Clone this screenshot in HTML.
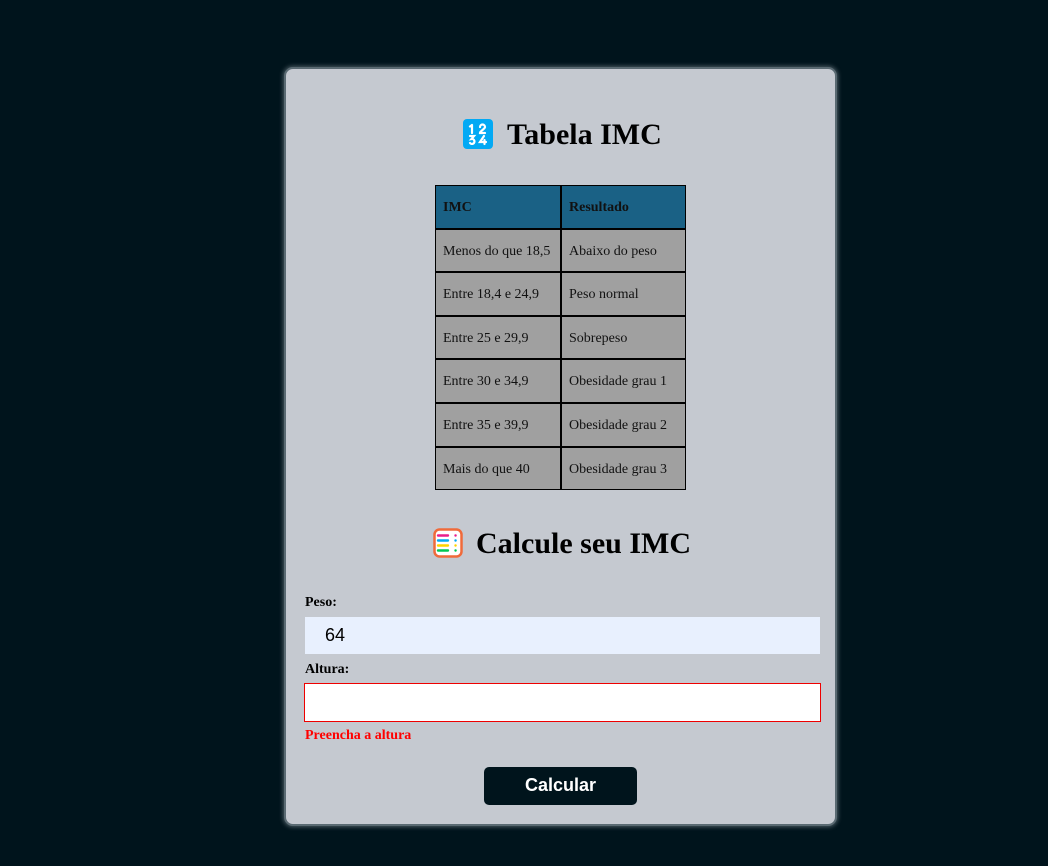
<!DOCTYPE html>
<html><head><meta charset="utf-8"><style>
*{box-sizing:border-box}
body{margin:0;width:1048px;height:866px;background:#00141c;font-family:"Liberation Serif",serif;position:relative;overflow:hidden}
.card{position:absolute;left:284px;top:67px;width:553px;height:759px;background:#c5c9d0;border-radius:9px;border:2px solid #5a6a72;box-shadow:0 0 4px 1px #4a5a62}
.t{position:absolute;font-weight:bold;font-size:30px;color:#000;white-space:nowrap}
.c{position:absolute;border:1px solid #000;background:#a0a0a0;font-size:14px;padding-left:7px;padding-top:2px;display:flex;align-items:center;color:#111}
.h{background:#1a6185;font-weight:bold}
.lab{position:absolute;left:305px;font-weight:bold;font-size:14px}
</style></head><body>
<div class="card"></div>
<svg style="position:absolute;left:463px;top:119px" width="30" height="30" viewBox="0 0 30 30"><rect width="30" height="30" rx="4" fill="#03a9f4"/><g fill="none" stroke="#fff" stroke-width="2.2" stroke-linecap="round"><path d="M9 6v8M7 7.5l2-1.5"/><path d="M17 8a2.5 2.5 0 0 1 5 0c0 2-5 4-5 6h5"/><path d="M7 17h4l-2.5 3a2.5 2.5 0 1 1-1.5 4"/><path d="M21 17l-4 6h6M21.5 21v4"/></g></svg>
<div class="t" style="left:507px;top:118px">Tabela IMC</div>
<div id="tb"></div>
<svg style="position:absolute;left:433px;top:528px" width="30" height="30" viewBox="0 0 30 30"><rect x="1.5" y="1.5" width="27" height="27" rx="5" fill="#fff" stroke="#f06a3a" stroke-width="2.5"/><g stroke-width="2.4" stroke-linecap="round" fill="none"><path d="M5 7.5h10M22.5 7.5h.1" stroke="#e91e8c"/><path d="M5 12.5h10M22.5 12.5h.1" stroke="#03a9f4"/><path d="M5 17.5h10M22.5 17.5h.1" stroke="#ffd400"/><path d="M5 22.5h10M22.5 22.5h.1" stroke="#00c853"/></g></svg>
<div class="t" style="left:476px;top:527px">Calcule seu IMC</div>
<div class="lab" style="top:595px">Peso:</div>
<div style="position:absolute;left:305px;top:617px;width:515px;height:37px;background:#e8f0fe;font-family:'Liberation Sans',sans-serif;font-size:18px;padding-left:20px;line-height:37px">64</div>
<div class="lab" style="top:662px">Altura:</div>
<div style="position:absolute;left:304px;top:683px;width:517px;height:39px;background:#fff;border:1px solid #e00"></div>
<div class="lab" style="top:728px;color:#f00">Preencha a altura</div>
<div style="position:absolute;left:484px;top:767px;width:153px;height:38px;background:#00141c;border-radius:5px;color:#fff;font-family:'Liberation Sans',sans-serif;font-weight:bold;font-size:18px;text-align:center;line-height:37px">Calcular</div>
<script>
var r=[["IMC","Resultado"],["Menos do que 18,5","Abaixo do peso"],["Entre 18,4 e 24,9","Peso normal"],["Entre 25 e 29,9","Sobrepeso"],["Entre 30 e 34,9","Obesidade grau 1"],["Entre 35 e 39,9","Obesidade grau 2"],["Mais do que 40","Obesidade grau 3"]],h="";
for(var i=0;i<7;i++){var y=Math.round(185+i*43.6),y2=Math.round(185+(i+1)*43.6);
h+='<div class="c'+(i?'':' h')+'" style="left:435px;top:'+y+'px;width:126px;height:'+(y2-y)+'px">'+r[i][0]+'</div>';
h+='<div class="c'+(i?'':' h')+'" style="left:561px;top:'+y+'px;width:125px;height:'+(y2-y)+'px">'+r[i][1]+'</div>';}
document.getElementById('tb').innerHTML=h;
</script>
</body></html>
